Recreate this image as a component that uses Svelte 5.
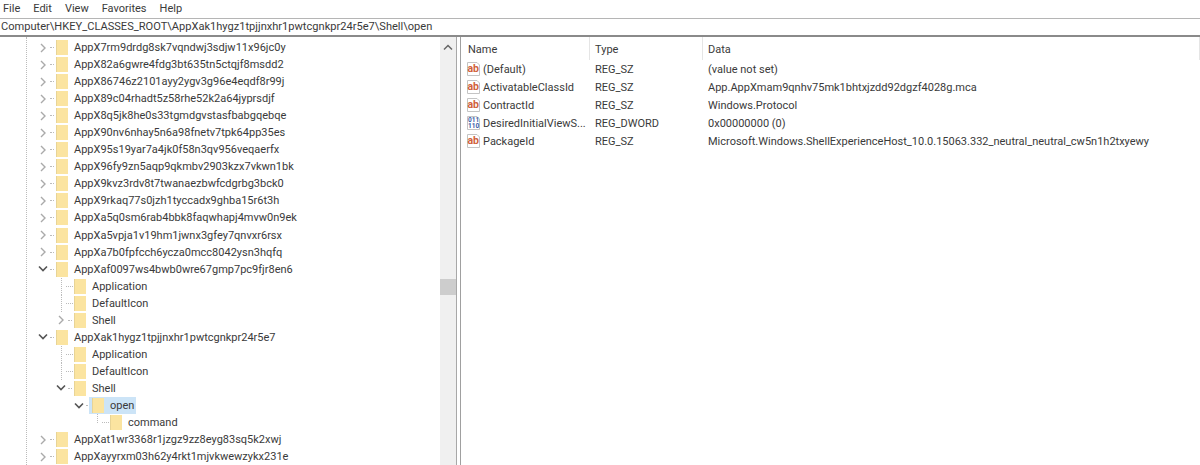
<script lang="ts">
	type Row = { name: string; depth: number; toggle?: 'open' | 'closed'; selected?: boolean };

	const rows: Row[] = [
		{ name: 'AppX7rm9drdg8sk7vqndwj3sdjw11x96jc0y', depth: 0, toggle: 'closed' },
		{ name: 'AppX82a6gwre4fdg3bt635tn5ctqjf8msdd2', depth: 0, toggle: 'closed' },
		{ name: 'AppX86746z2101ayy2ygv3g96e4eqdf8r99j', depth: 0, toggle: 'closed' },
		{ name: 'AppX89c04rhadt5z58rhe52k2a64jyprsdjf', depth: 0, toggle: 'closed' },
		{ name: 'AppX8q5jk8he0s33tgmdgvstasfbabgqebqe', depth: 0, toggle: 'closed' },
		{ name: 'AppX90nv6nhay5n6a98fnetv7tpk64pp35es', depth: 0, toggle: 'closed' },
		{ name: 'AppX95s19yar7a4jk0f58n3qv956veqaerfx', depth: 0, toggle: 'closed' },
		{ name: 'AppX96fy9zn5aqp9qkmbv2903kzx7vkwn1bk', depth: 0, toggle: 'closed' },
		{ name: 'AppX9kvz3rdv8t7twanaezbwfcdgrbg3bck0', depth: 0, toggle: 'closed' },
		{ name: 'AppX9rkaq77s0jzh1tyccadx9ghba15r6t3h', depth: 0, toggle: 'closed' },
		{ name: 'AppXa5q0sm6rab4bbk8faqwhapj4mvw0n9ek', depth: 0, toggle: 'closed' },
		{ name: 'AppXa5vpja1v19hm1jwnx3gfey7qnvxr6rsx', depth: 0, toggle: 'closed' },
		{ name: 'AppXa7b0fpfcch6ycza0mcc8042ysn3hqfq', depth: 0, toggle: 'closed' },
		{ name: 'AppXaf0097ws4bwb0wre67gmp7pc9fjr8en6', depth: 0, toggle: 'open' },
		{ name: 'Application', depth: 1 },
		{ name: 'DefaultIcon', depth: 1 },
		{ name: 'Shell', depth: 1, toggle: 'closed' },
		{ name: 'AppXak1hygz1tpjjnxhr1pwtcgnkpr24r5e7', depth: 0, toggle: 'open' },
		{ name: 'Application', depth: 1 },
		{ name: 'DefaultIcon', depth: 1 },
		{ name: 'Shell', depth: 1, toggle: 'open' },
		{ name: 'open', depth: 2, toggle: 'open', selected: true },
		{ name: 'command', depth: 3 },
		{ name: 'AppXat1wr3368r1jzgz9zz8eyg83sq5k2xwj', depth: 0, toggle: 'closed' },
		{ name: 'AppXayyrxm03h62y4rkt1mjvkwewzykx231e', depth: 0, toggle: 'closed' }
	];

	const values = [
		{ name: '(Default)', type: 'REG_SZ', data: '(value not set)', kind: 'sz' },
		{ name: 'ActivatableClassId', type: 'REG_SZ', data: 'App.AppXmam9qnhv75mk1bhtxjzdd92dgzf4028g.mca', kind: 'sz' },
		{ name: 'ContractId', type: 'REG_SZ', data: 'Windows.Protocol', kind: 'sz' },
		{ name: 'DesiredInitialViewS...', type: 'REG_DWORD', data: '0x00000000 (0)', kind: 'bin' },
		{ name: 'PackageId', type: 'REG_SZ', data: 'Microsoft.Windows.ShellExperienceHost_10.0.15063.332_neutral_neutral_cw5n1h2txyewy', kind: 'sz' }
	];
</script>

<div class="editor">
	<nav class="menu">
		<span>File</span><span>Edit</span><span>View</span><span>Favorites</span><span>Help</span>
	</nav>
	<div class="address">Computer\HKEY_CLASSES_ROOT\AppXak1hygz1tpjjnxhr1pwtcgnkpr24r5e7\Shell\open</div>

	<div class="panes">
		<div class="tree-pane">
			<div class="tree">
				<div class="guide"></div>
				{#each rows as row}
					<div class="row" style="padding-left: {37 + row.depth * 18}px">
						<span class="toggle">
							{#if row.toggle === 'open'}
								<svg width="10" height="8" viewBox="0 0 10 8"><path d="M1 1.5 5 5.5 9 1.5" fill="none" stroke="#555" stroke-width="1.6" /></svg>
							{:else if row.toggle === 'closed'}
								<svg width="8" height="10" viewBox="0 0 8 10"><path d="M2 1 6 5 2 9" fill="none" stroke="#aaa" stroke-width="1.4" /></svg>
							{:else}
								<span class="branch" class:elbow={row.depth === 3}></span>
							{/if}
						</span>
						<span class="dots" class:long={!row.toggle}></span>
						<span class="item" class:selected={row.selected}>
							<span class="folder"></span>
							<span class="label">{row.name}</span>
						</span>
					</div>
				{/each}
			</div>
			<div class="scrollbar">
				<svg class="arrow" width="10" height="7" viewBox="0 0 10 7"><path d="M1 5.5 5 1.5 9 5.5" fill="none" stroke="#666" stroke-width="1.5" /></svg>
				<div class="thumb"></div>
			</div>
		</div>

		<div class="list-pane">
			<div class="head">
				<span class="col-name">Name</span>
				<span class="col-type">Type</span>
				<span class="col-data">Data</span>
			</div>
			{#each values as v}
				<div class="value">
					<span class="col-name name-cell">
						<svg class="val-icon" width="15" height="16" viewBox="0 0 15 16">
							<path d="M1.5 1.5H11L13.5 4V14.5H1.5Z" fill="#fff" stroke="#c4c4c4" />
							{#if v.kind === 'sz'}
								<text x="1.5" y="11" class="ab">ab</text>
							{:else}
								<text x="2" y="7" class="bin">011</text>
								<text x="2" y="13" class="bin">110</text>
							{/if}
						</svg>
						{v.name}
					</span>
					<span class="col-type">{v.type}</span>
					<span class="col-data">{v.data}</span>
				</div>
			{/each}
		</div>
	</div>
</div>

<style>
	:global(body) {
		margin: 0;
		background: #fff;
	}

	.editor {
		width: 1200px;
		height: 465px;
		overflow: hidden;
		font-family: Roboto, 'Open Sans', sans-serif;
		font-size: 11px;
		color: #3a3a3a;
		display: flex;
		flex-direction: column;
	}

	.menu {
		display: flex;
		gap: 13px;
		height: 17px;
		padding-bottom: 1px;
		align-items: center;
		padding-left: 3px;
	}

	.address {
		height: 16px;
		line-height: 15px;
		padding-left: 1px;
		font-size: 11.08px;
		border-top: 1px solid #b5b5b5;
		border-bottom: 2px solid #8a8a8a;
	}

	.panes {
		flex: 1;
		display: flex;
		min-height: 0;
	}

	.tree-pane {
		width: 457px;
		display: flex;
		flex-shrink: 0;
		border-right: 1px solid #a8a8a8;
		box-sizing: border-box;
	}

	.tree {
		flex: 1;
		position: relative;
		padding-top: 2px;
	}

	.guide {
		position: absolute;
		left: 26px;
		top: 0;
		bottom: 0;
		border-left: 1px dotted #bbb;
	}

	.row {
		height: 17.05px;
		display: flex;
		align-items: center;
	}

	.toggle {
		width: 12px;
		height: 17px;
		display: flex;
		align-items: center;
		justify-content: center;
		flex-shrink: 0;
	}

	.branch {
		align-self: stretch;
		border-left: 1px dotted #bbb;
		margin-left: 6px;
		width: 5px;
	}

	.branch.elbow {
		height: 9px;
		align-self: flex-start;
	}

	.dots {
		width: 4px;
		margin: 0 2px 0 1px;
		border-top: 1px dotted #bbb;
		flex-shrink: 0;
	}

	.dots.long {
		width: 7px;
		margin: 0 1px 0 -1px;
	}

	.item {
		display: flex;
		align-items: center;
		height: 17px;
		padding-right: 2px;
	}

	.item.selected {
		background: #cce4f7;
		margin-left: -3px;
		padding-left: 3px;
	}

	.folder {
		width: 12px;
		height: 15px;
		background: #fbe4a0;
		border-left: 1px solid #e8d496;
		box-sizing: border-box;
		margin-right: 6px;
		flex-shrink: 0;
	}

	.label {
		white-space: nowrap;
	}

	.scrollbar {
		width: 16px;
		background: #f0f0f0;
		position: relative;
		flex-shrink: 0;
	}

	.arrow {
		position: absolute;
		left: 3px;
		top: 7px;
	}

	.thumb {
		position: absolute;
		left: 0;
		right: 0;
		top: 242px;
		height: 16px;
		background: #cdcdcd;
	}

	.list-pane {
		flex: 1;
		border-left: 1px solid #a0a0a0;
		margin-left: 3px;
		padding-left: 2px;
	}

	.head,
	.value {
		display: flex;
		height: 18px;
		align-items: center;
		white-space: nowrap;
	}

	.head {
		height: 23px;
	}

	.head span {
		align-self: stretch;
		display: flex;
		align-items: center;
		padding-top: 2px;
		border-right: 1px solid #e5e5e5;
	}

	.col-name {
		width: 127px;
		padding-left: 5px;
		box-sizing: border-box;
		flex-shrink: 0;
	}

	.col-type {
		width: 113px;
		padding-left: 5px;
		box-sizing: border-box;
		flex-shrink: 0;
	}

	.col-data {
		flex: 1;
		padding-left: 5px;
	}

	.name-cell {
		display: flex;
		align-items: center;
		gap: 2px;
		padding-left: 3px;
	}

	.val-icon {
		flex-shrink: 0;
	}

	.ab {
		font-size: 10.5px;
		font-weight: 700;
		fill: #d0603a;
	}

	.bin {
		font-size: 6.5px;
		font-weight: 700;
		fill: #3a5da8;
	}
</style>
